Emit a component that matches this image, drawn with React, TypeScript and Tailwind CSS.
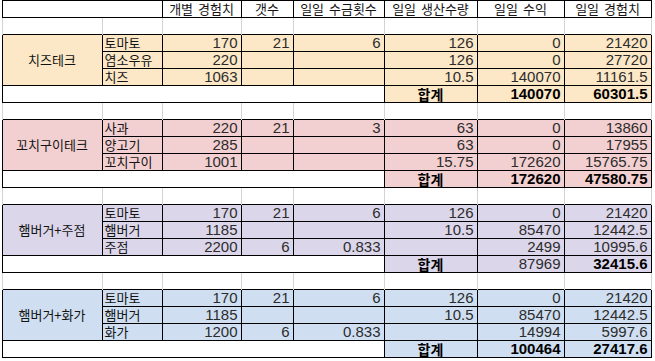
import React from 'react';

type Block = {
    name: string;
    bg: string;
    rows: string[][];
    total: [string, string];
    bold: [boolean, boolean];
};

const blocks: Block[] = [
    {
        name: '치즈테크',
        bg: 'bg-[#fce8c7]',
        rows: [
            ['토마토', '170', '21', '6', '126', '0', '21420'],
            ['염소우유', '220', '', '', '126', '0', '27720'],
            ['치즈', '1063', '', '', '10.5', '140070', '11161.5'],
        ],
        total: ['140070', '60301.5'],
        bold: [true, true],
    },
    {
        name: '꼬치구이테크',
        bg: 'bg-[#f2cfd0]',
        rows: [
            ['사과', '220', '21', '3', '63', '0', '13860'],
            ['양고기', '285', '', '', '63', '0', '17955'],
            ['꼬치구이', '1001', '', '', '15.75', '172620', '15765.75'],
        ],
        total: ['172620', '47580.75'],
        bold: [true, true],
    },
    {
        name: '햄버거+주점',
        bg: 'bg-[#dcd6ea]',
        rows: [
            ['토마토', '170', '21', '6', '126', '0', '21420'],
            ['햄버거', '1185', '', '', '10.5', '85470', '12442.5'],
            ['주점', '2200', '6', '0.833', '', '2499', '10995.6'],
        ],
        total: ['87969', '32415.6'],
        bold: [false, true],
    },
    {
        name: '햄버거+화가',
        bg: 'bg-[#cfdff1]',
        rows: [
            ['토마토', '170', '21', '6', '126', '0', '21420'],
            ['햄버거', '1185', '', '', '10.5', '85470', '12442.5'],
            ['화가', '1200', '6', '0.833', '', '14994', '5997.6'],
        ],
        total: ['100464', '27417.6'],
        bold: [true, true],
    },
];

const headers = ['개별 경험치', '갯수', '일일 수금횟수', '일일 생산수량', '일일 수익', '일일 경험치'];

const hangul = "font-['Noto_Sans_CJK_KR'] text-[13px] leading-[14px] text-[#141414]";
const num = "border border-black px-[3px] text-right align-bottom pb-[1px] font-['Liberation_Sans'] text-[15px] leading-[15px]";

function BlankRow() {
    return (
        <tr className="h-[17px]">
            <td className="p-0" />
            {Array.from({ length: 8 }).map((_, i) => (
                <td key={i} className="p-0 border-x border-[#d3d3d3]" />
            ))}
            <td className="p-0" />
        </tr>
    );
}

function BlockRows({ block }: { block: Block }) {
    return (
        <>
            {block.rows.map((r, i) => (
                <tr key={i} className="h-[17px]">
                    <td className="p-0" />
                    {i === 0 && (
                        <td rowSpan={3} className={`border border-black p-0 text-center align-middle ${block.bg} ${hangul}`}>
                            {block.name}
                        </td>
                    )}
                    <td className={`border border-black p-0 pl-[2px] text-left align-middle overflow-hidden whitespace-nowrap ${block.bg} ${hangul}`}>{r[0]}</td>
                    {r.slice(1).map((v, j) => (
                        <td key={j} className={`${num} ${block.bg} text-[#2c2c2c]`}>{v}</td>
                    ))}
                    <td className="p-0" />
                </tr>
            ))}
            <tr className="h-[17px]">
                <td className="p-0" />
                <td colSpan={5} className="border border-black bg-white p-0" />
                <td className={`border border-black p-0 text-center align-middle font-['Noto_Sans_CJK_KR'] text-[14px] leading-[14px] font-bold text-black ${block.bg}`}>
                    합계
                </td>
                <td className={`${num} ${block.bg} ${block.bold[0] ? 'font-bold text-black' : 'text-[#2c2c2c]'}`}>{block.total[0]}</td>
                <td className={`${num} ${block.bg} ${block.bold[1] ? 'font-bold text-black' : 'text-[#2c2c2c]'}`}>{block.total[1]}</td>
                <td className="p-0" />
            </tr>
        </>
    );
}

export default function App() {
    return (
        <div className="w-[655px] h-[361px] overflow-hidden bg-white">
            <table className="table-fixed border-collapse w-[655px]">
                <colgroup>
                    <col className="w-[2px]" />
                    <col className="w-[100px]" />
                    <col className="w-[60px]" />
                    <col className="w-[79px]" />
                    <col className="w-[52px]" />
                    <col className="w-[91px]" />
                    <col className="w-[93px]" />
                    <col className="w-[87px]" />
                    <col className="w-[87px]" />
                    <col className="w-[4px]" />
                </colgroup>
                <tbody>
                    <tr className="h-[17px]">
                        <td className="p-0" />
                        <td colSpan={2} className="border border-black p-0" />
                        {headers.map((h) => (
                            <td key={h} className={`border border-black p-0 text-center align-middle whitespace-nowrap [word-spacing:2px] ${hangul}`}>
                                {h}
                            </td>
                        ))}
                        <td className="p-0" />
                    </tr>
                    {blocks.map((b) => (
                        <React.Fragment key={b.name}>
                            <BlankRow />
                            <BlockRows block={b} />
                        </React.Fragment>
                    ))}
                </tbody>
            </table>
        </div>
    );
}
